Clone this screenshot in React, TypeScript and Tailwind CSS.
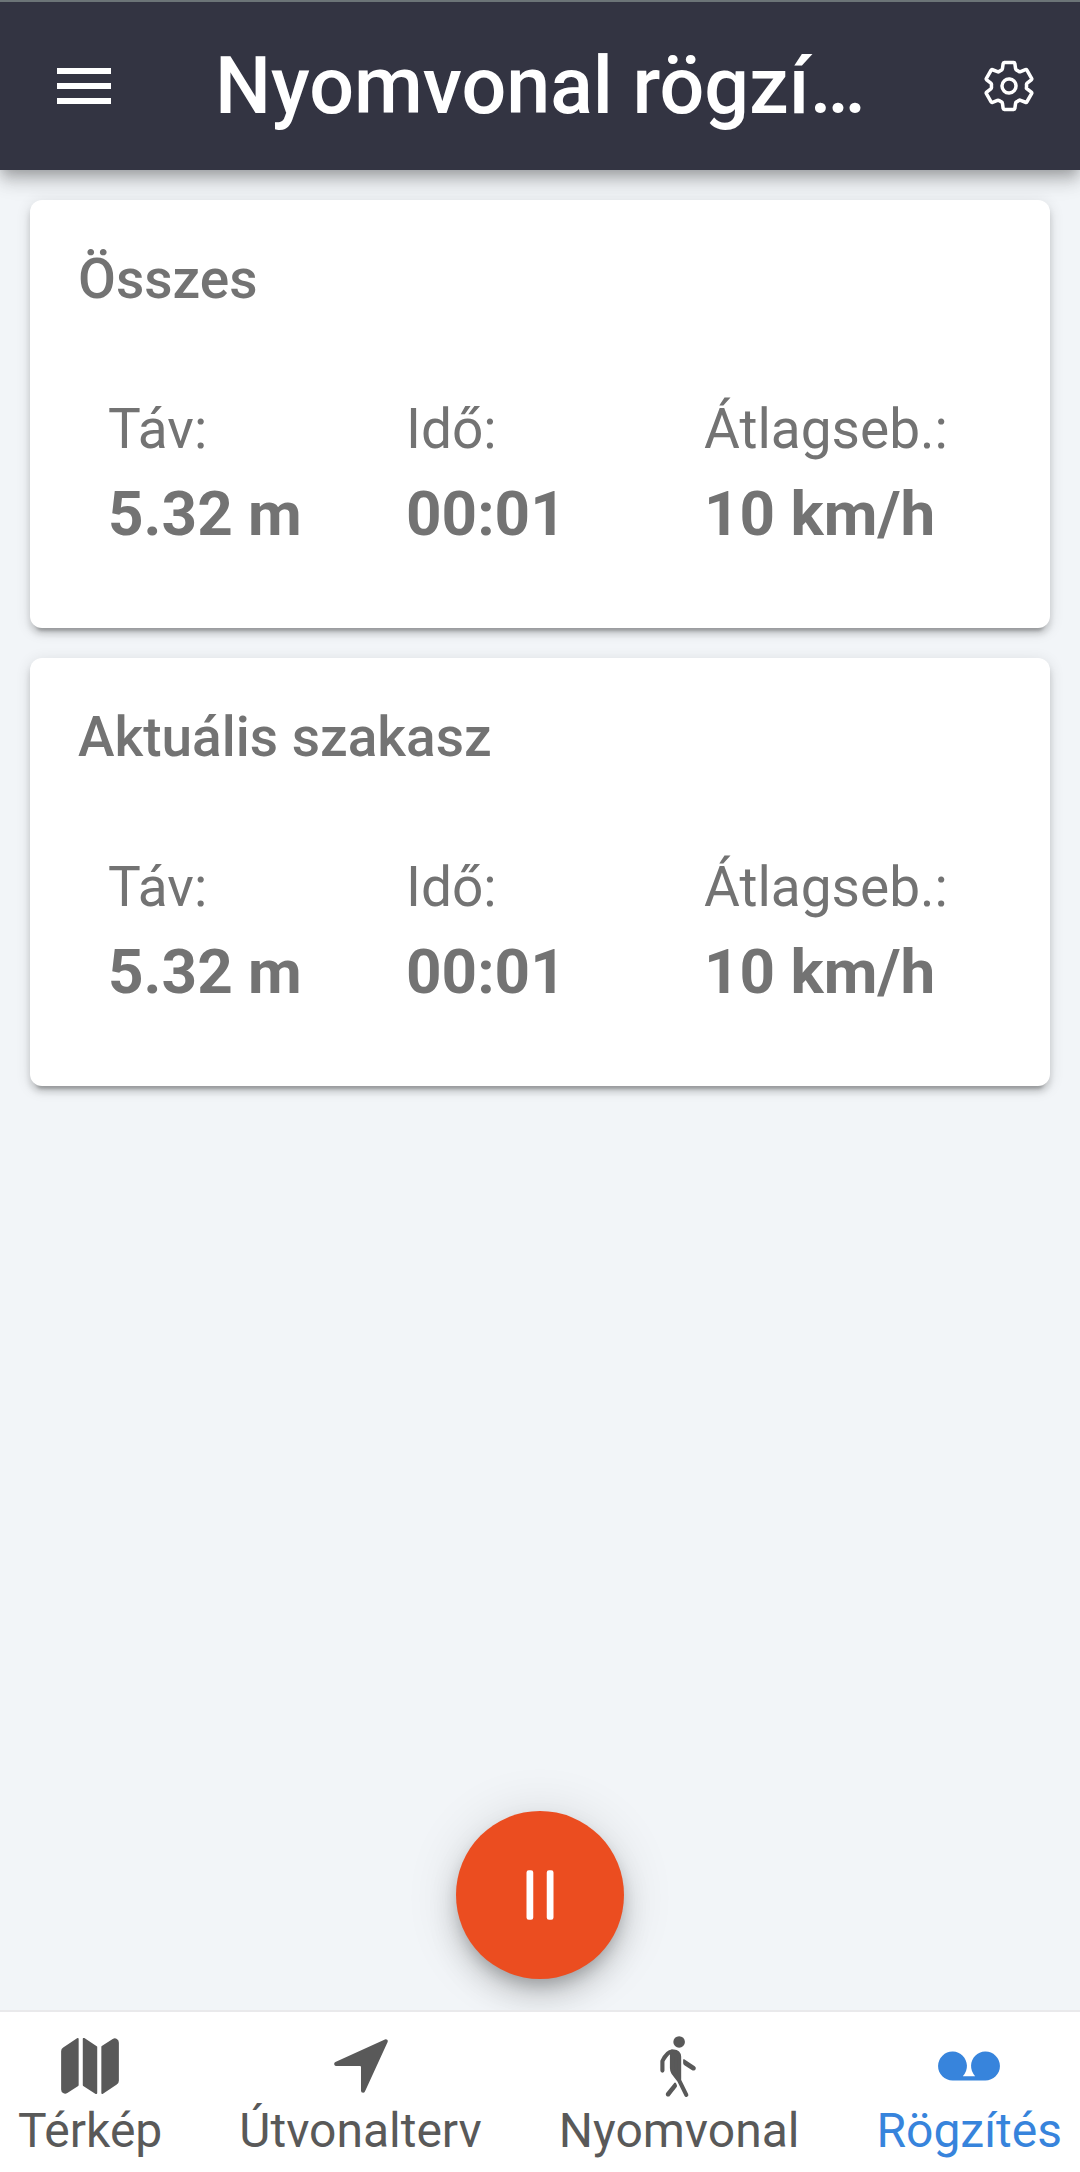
import type { IconType } from 'react-icons';
import {
  IoMap,
  IoNavigate,
  IoPauseOutline,
  IoRecording,
  IoSettingsOutline,
  IoWalk,
} from 'react-icons/io5';

type Stat = { label: string; value: string };

const stats: Stat[] = [
  { label: 'Táv:', value: '5.32 m' },
  { label: 'Idő:', value: '00:01' },
  { label: 'Átlagseb.:', value: '10 km/h' },
];

const tabs: { label: string; href: string; icon: IconType; active?: boolean }[] = [
  { label: 'Térkép', href: '#map', icon: IoMap },
  { label: 'Útvonalterv', href: '#route', icon: IoNavigate },
  { label: 'Nyomvonal', href: '#track', icon: IoWalk },
  { label: 'Rögzítés', href: '#record', icon: IoRecording, active: true },
];

function StatsCard({ title, items }: { title: string; items: Stat[] }) {
  return (
    <section className="rounded-xl bg-white px-12 pt-[47px] pb-[70px] text-[#737373] shadow-[0_9px_3px_-6px_rgba(0,0,0,0.2),0_6px_6px_0_rgba(0,0,0,0.14),0_3px_15px_0_rgba(0,0,0,0.12)]">
      <h2 className="text-[55px] leading-[64px] font-medium">{title}</h2>
      <dl className="mt-[82px] grid grid-cols-3 px-[15px]">
        {items.map((item) => (
          <div key={item.label} className="px-[15px] whitespace-nowrap">
            <dt className="text-[55px] leading-[72px]">{item.label}</dt>
            <dd className="mt-[5px] text-[62px] leading-[88px] font-bold">{item.value}</dd>
          </div>
        ))}
      </dl>
    </section>
  );
}

export default function App() {
  return (
    <div className="flex min-h-screen flex-col bg-[#f2f5f8] font-[Roboto,sans-serif]">
      {/* Header */}
      <header className="flex h-[170px] items-center border-t-2 border-[#6c7477] bg-[#333442] px-[43px] text-white shadow-[0_6px_12px_-3px_rgba(0,0,0,0.2),0_12px_15px_0_rgba(0,0,0,0.14),0_3px_30px_0_rgba(0,0,0,0.12)]">
        <button type="button" aria-label="Menü" className="p-[13px]">
          <svg width="56" height="36" viewBox="0 0 56 36" fill="currentColor">
            <path d="M1 0h54v6H1zM1 15h54v6H1zM1 30h54v6H1z" />
          </svg>
        </button>
        <h1 className="ml-[90px] flex-1 truncate text-[79px] leading-[104px] font-medium">
          Nyomvonal rögzí…
        </h1>
        <button type="button" aria-label="Beállítások">
          <IoSettingsOutline size={56} />
        </button>
      </header>

      {/* Recording stats */}
      <main className="flex flex-1 flex-col gap-[30px] px-[30px] pt-[30px] pb-[31px]">
        <StatsCard title="Összes" items={stats} />
        <StatsCard title="Aktuális szakasz" items={stats} />
        <button
          type="button"
          aria-label="Szünet"
          className="mt-auto flex size-[168px] items-center justify-center self-center rounded-full bg-[#eb4d20] text-white shadow-[0_9px_15px_-3px_rgba(0,0,0,0.2),0_18px_30px_0_rgba(0,0,0,0.14),0_3px_54px_0_rgba(0,0,0,0.12)]"
        >
          <IoPauseOutline size={72} />
        </button>
      </main>

      {/* Tab bar */}
      <nav className="flex h-[162px] items-start justify-between border-t-2 border-[#e9e9eb] bg-white px-[18px] pt-[21px]">
        {tabs.map(({ label, href, icon: Icon, active }) => (
          <a
            key={label}
            href={href}
            aria-current={active ? 'page' : undefined}
            className={`flex flex-col items-center gap-1 ${active ? 'text-[#3784dc]' : 'text-[#595959]'}`}
          >
            <Icon size={66} />
            <span className="text-[48px] leading-[56px]">{label}</span>
          </a>
        ))}
      </nav>
    </div>
  );
}
